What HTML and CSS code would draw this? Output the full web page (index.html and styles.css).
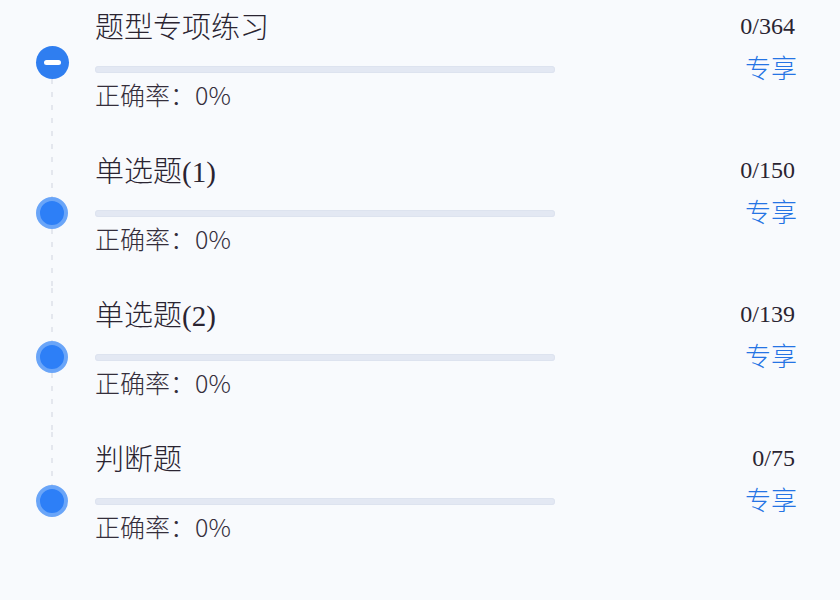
FILE: index.html
```html
<!DOCTYPE html>
<html lang="zh">
<head>
<meta charset="utf-8">
<title>题型专项练习</title>
<link rel="stylesheet" href="styles.css">
</head>
<body>
<ul class="list">
  <li class="row first">
    <div class="rail">
      <span class="seg top"></span>
      <span class="minus"><span class="bar-w"></span></span>
      <span class="seg bottom"></span>
    </div>
    <div class="main">
      <div class="title">题型专项练习</div>
      <div class="track"></div>
      <div class="rate">正确率：0%</div>
    </div>
    <div class="side">
      <div class="count">0/364</div>
      <div class="vip">专享</div>
    </div>
  </li>
  <li class="row">
    <div class="rail">
      <span class="seg top"></span>
      <span class="dot"></span>
      <span class="seg bottom"></span>
    </div>
    <div class="main">
      <div class="title">单选题(1)</div>
      <div class="track"></div>
      <div class="rate">正确率：0%</div>
    </div>
    <div class="side">
      <div class="count">0/150</div>
      <div class="vip">专享</div>
    </div>
  </li>
  <li class="row">
    <div class="rail">
      <span class="seg top"></span>
      <span class="dot"></span>
      <span class="seg bottom"></span>
    </div>
    <div class="main">
      <div class="title">单选题(2)</div>
      <div class="track"></div>
      <div class="rate">正确率：0%</div>
    </div>
    <div class="side">
      <div class="count">0/139</div>
      <div class="vip">专享</div>
    </div>
  </li>
  <li class="row last">
    <div class="rail">
      <span class="seg top"></span>
      <span class="dot"></span>
      <span class="seg bottom"></span>
    </div>
    <div class="main">
      <div class="title">判断题</div>
      <div class="track"></div>
      <div class="rate">正确率：0%</div>
    </div>
    <div class="side">
      <div class="count">0/75</div>
      <div class="vip">专享</div>
    </div>
  </li>
</ul>
</body>
</html>
```

FILE: styles.css
```css
html, body {
  margin: 0;
  padding: 0;
  background: #f8fafd;
  height: 600px;
  overflow: hidden;
}

.list {
  list-style: none;
  margin: 0;
  padding: 0;
}

.row {
  display: grid;
  grid-template-columns: 95px 1fr auto;
  height: 144px;
}

.rail {
  display: flex;
  flex-direction: column;
  align-items: center;
  padding-left: 9px;
}

.seg {
  width: 2px;
  background-image: linear-gradient(to bottom, #e4e7ee 0 5px, transparent 5px 13px);
  background-size: 2px 13px;
}

.seg.top {
  height: 53px;
  flex: none;
}

.seg.bottom {
  flex: 1;
}

.first .seg.top {
  height: 46px;
  background: none;
}

.last .seg.bottom {
  background: none;
}

.dot {
  width: 32px;
  height: 32px;
  box-sizing: border-box;
  border-radius: 50%;
  background: #2d7ff7;
  border: 4px solid #6aa5f8;
  flex: none;
}

.minus {
  width: 33px;
  height: 33px;
  border-radius: 50%;
  background: #2f7ef0;
  display: flex;
  align-items: center;
  justify-content: center;
  flex: none;
}

.bar-w {
  width: 17px;
  height: 5px;
  border-radius: 3px;
  background: #ffffff;
}

.main {
  padding-top: 10px;
}

.title {
  font-family: "Liberation Serif", "Noto Sans CJK SC", serif;
  font-size: 29px;
  font-weight: 300;
  line-height: 36px;
  color: #2a2431;
}

.track {
  width: 460px;
  height: 7px;
  margin-top: 20px;
  border-radius: 4px;
  background: #e3e8f3;
  box-shadow: inset 0 0 0 1px #dde3ef;
}

.rate {
  margin-top: 7px;
  font-family: "Noto Sans CJK SC", sans-serif;
  font-size: 25px;
  font-weight: 300;
  line-height: 28px;
  color: #342e3b;
}

.side {
  padding-top: 11px;
  padding-right: 43px;
  display: flex;
  flex-direction: column;
  align-items: flex-end;
}

.count {
  font-family: "Liberation Serif", serif;
  font-size: 24px;
  line-height: 30px;
  color: #2a2431;
  padding-right: 2px;
}

.vip {
  margin-top: 10px;
  font-family: "Noto Sans CJK SC", sans-serif;
  font-size: 26px;
  font-weight: 300;
  line-height: 32px;
  color: #2574e4;
}
```
